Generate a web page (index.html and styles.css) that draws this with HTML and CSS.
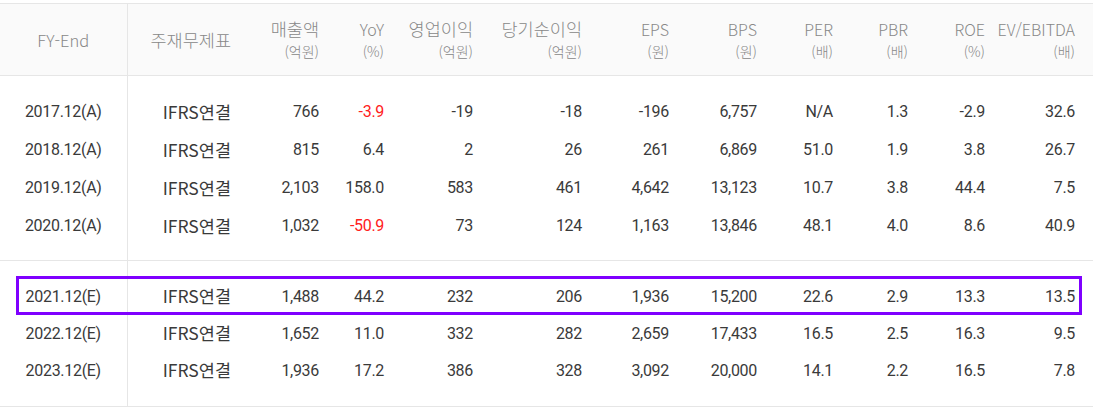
FILE: index.html
```html
<!DOCTYPE html>
<html lang="ko">
<head>
<meta charset="utf-8">
<link rel="stylesheet" href="styles.css">
</head>
<body>
<div class="wrap">
  <table class="fin">
    <colgroup>
      <col class="c0"><col class="c1"><col class="c2"><col class="c3"><col class="c4"><col class="c5">
      <col class="c6"><col class="c7"><col class="c8"><col class="c9"><col class="c10"><col class="c11">
    </colgroup>
    <thead>
      <tr>
        <th class="first"><span class="h1">FY-End</span></th>
        <th><span class="h1 k">주재무제표</span></th>
        <th><span class="h1 k">매출액</span><span class="h2">(억원)</span></th>
        <th><span class="h1">YoY</span><span class="h2">(%)</span></th>
        <th><span class="h1 k">영업이익</span><span class="h2">(억원)</span></th>
        <th><span class="h1 k">당기순이익</span><span class="h2">(억원)</span></th>
        <th><span class="h1">EPS</span><span class="h2">(원)</span></th>
        <th><span class="h1">BPS</span><span class="h2">(원)</span></th>
        <th><span class="h1">PER</span><span class="h2">(배)</span></th>
        <th><span class="h1">PBR</span><span class="h2">(배)</span></th>
        <th><span class="h1">ROE</span><span class="h2">(%)</span></th>
        <th class="last"><span class="h1">EV/EBITDA</span><span class="h2">(배)</span></th>
      </tr>
    </thead>
    <tbody class="grp a">
      <tr class="sp s1"><td class="first"></td><td colspan="11"></td></tr>
      <tr><td class="first">2017.12(A)</td><td class="fs">IFRS연결</td><td>766</td><td class="neg">-3.9</td><td>-19</td><td>-18</td><td>-196</td><td>6,757</td><td>N/A</td><td>1.3</td><td>-2.9</td><td class="last">32.6</td></tr>
      <tr><td class="first">2018.12(A)</td><td class="fs">IFRS연결</td><td>815</td><td>6.4</td><td>2</td><td>26</td><td>261</td><td>6,869</td><td>51.0</td><td>1.9</td><td>3.8</td><td class="last">26.7</td></tr>
      <tr><td class="first">2019.12(A)</td><td class="fs">IFRS연결</td><td>2,103</td><td>158.0</td><td>583</td><td>461</td><td>4,642</td><td>13,123</td><td>10.7</td><td>3.8</td><td>44.4</td><td class="last">7.5</td></tr>
      <tr><td class="first">2020.12(A)</td><td class="fs">IFRS연결</td><td>1,032</td><td class="neg">-50.9</td><td>73</td><td>124</td><td>1,163</td><td>13,846</td><td>48.1</td><td>4.0</td><td>8.6</td><td class="last">40.9</td></tr>
      <tr class="sp s2"><td class="first"></td><td colspan="11"></td></tr>
    </tbody>
    <tbody class="grp b">
      <tr class="sp s3"><td class="first"></td><td colspan="11"></td></tr>
      <tr><td class="first">2021.12(E)</td><td class="fs">IFRS연결</td><td>1,488</td><td>44.2</td><td>232</td><td>206</td><td>1,936</td><td>15,200</td><td>22.6</td><td>2.9</td><td>13.3</td><td class="last">13.5</td></tr>
      <tr><td class="first">2022.12(E)</td><td class="fs">IFRS연결</td><td>1,652</td><td>11.0</td><td>332</td><td>282</td><td>2,659</td><td>17,433</td><td>16.5</td><td>2.5</td><td>16.3</td><td class="last">9.5</td></tr>
      <tr><td class="first">2023.12(E)</td><td class="fs">IFRS연결</td><td>1,936</td><td>17.2</td><td>386</td><td>328</td><td>3,092</td><td>20,000</td><td>14.1</td><td>2.2</td><td>16.5</td><td class="last">7.8</td></tr>
      <tr class="sp s4"><td class="first"></td><td colspan="11"></td></tr>
    </tbody>
  </table>
  <div class="highlight"></div>
</div>
</body>
</html>
```

FILE: styles.css
```css
html, body {
  margin: 0;
  padding: 0;
  background: #ffffff;
}

.wrap {
  position: relative;
  padding-top: 3px;
  width: 1093px;
}

.fin {
  width: 1093px;
  table-layout: fixed;
  border-collapse: collapse;
  font-family: Roboto, "Noto Sans CJK KR", sans-serif;
  font-size: 16px;
  letter-spacing: -0.3px;
  color: #3a3a3a;
}

.c0 { width: 127px; }
.c1 { width: 112px; }
.c2 { width: 88px; }
.c3 { width: 65px; }
.c4 { width: 89px; }
.c5 { width: 109px; }
.c6 { width: 87px; }
.c7 { width: 88px; }
.c8 { width: 76px; }
.c9 { width: 75px; }
.c10 { width: 77px; }
.c11 { width: 100px; }

.fin thead tr {
  height: 72px;
  background: #fafafa;
  border-top: 1px solid #e6e6e6;
  border-bottom: 1px solid #e6e6e6;
}

.fin th {
  font-family: "Noto Sans CJK KR", sans-serif;
  font-weight: 300;
  letter-spacing: 0;
  color: #888888;
  text-align: right;
  padding: 0 8px 0 0;
  vertical-align: middle;
}

.fin th .h1 {
  display: block;
  font-size: 16px;
  line-height: 22px;
}

.fin th .h1.k {
  font-size: 17.5px;
}

.fin th .h2 {
  display: block;
  font-size: 14px;
  line-height: 22px;
}

.fin th.first .h1 {
  font-size: 16.5px;
}

.fin .first {
  text-align: center;
  padding: 0;
  border-right: 1px solid #e6e6e6;
}

.fin .last {
  padding-right: 18px;
}

.fin td {
  text-align: right;
  padding: 0 8px 0 0;
  vertical-align: middle;
  white-space: nowrap;
}

.fin td.first {
  text-align: center;
  padding: 0;
}

.fin td.fs {
  font-family: "Noto Sans CJK KR", sans-serif;
  font-size: 17.5px;
  letter-spacing: 0;
  line-height: 1;
}

.fin .neg {
  color: #ff2020;
}

.grp.a tr { height: 38px; }
.grp.b tr { height: 37px; }
.grp.a { border-bottom: 1px solid #e6e6e6; }
.grp.b { border-bottom: 1px solid #e6e6e6; }

.grp tr.s1 { height: 17px; }
.grp tr.s2 { height: 16px; }
.grp tr.s3 { height: 17px; }
.grp tr.s4 { height: 18px; }

.highlight {
  position: absolute;
  left: 16px;
  top: 276px;
  width: 1066px;
  height: 39px;
  box-sizing: border-box;
  border: 3px solid #7f00ff;
  pointer-events: none;
}
```
